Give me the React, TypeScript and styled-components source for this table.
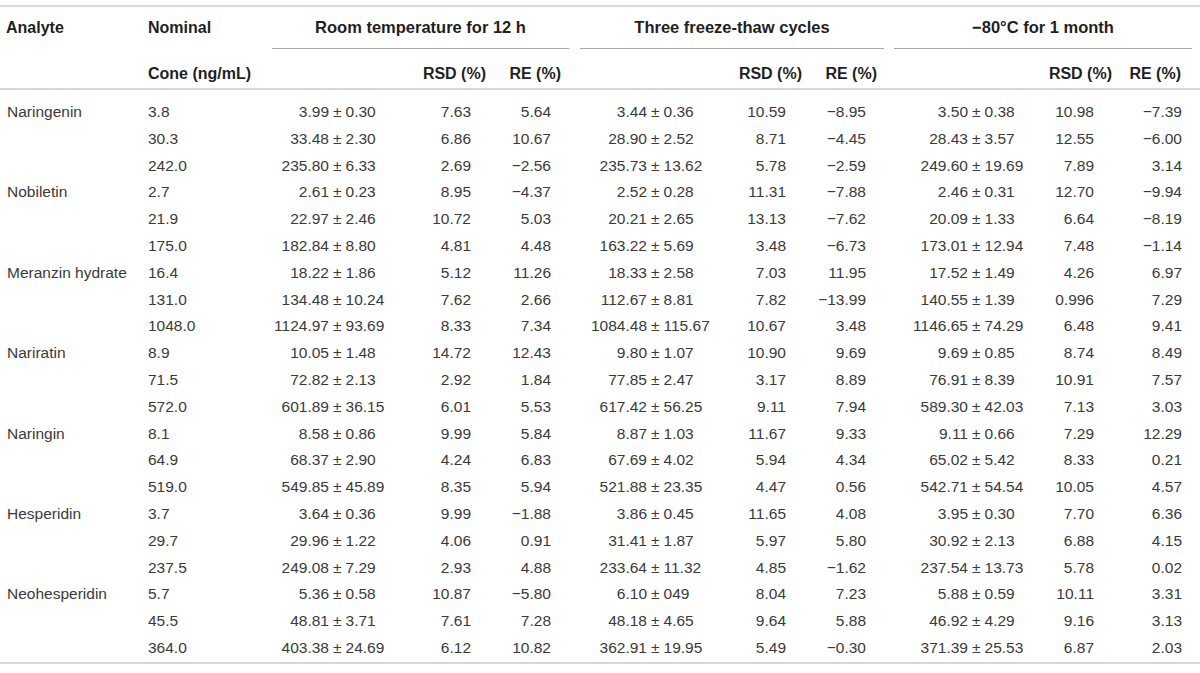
import styled, { createGlobalStyle } from "styled-components";

type Cond = { mean: string; sd: string; rsd: string; re: string };
type Level = { nominal: string; conds: Cond[] };
type Analyte = { name: string; levels: Level[] };

// one row of text: nominal | mean sd rsd re (x3)
const raw: [string, string, string[]][] = [
  ["Naringenin", "3.8", ["3.99", "0.30", "7.63", "5.64", "3.44", "0.36", "10.59", "−8.95", "3.50", "0.38", "10.98", "−7.39"]],
  ["", "30.3", ["33.48", "2.30", "6.86", "10.67", "28.90", "2.52", "8.71", "−4.45", "28.43", "3.57", "12.55", "−6.00"]],
  ["", "242.0", ["235.80", "6.33", "2.69", "−2.56", "235.73", "13.62", "5.78", "−2.59", "249.60", "19.69", "7.89", "3.14"]],
  ["Nobiletin", "2.7", ["2.61", "0.23", "8.95", "−4.37", "2.52", "0.28", "11.31", "−7.88", "2.46", "0.31", "12.70", "−9.94"]],
  ["", "21.9", ["22.97", "2.46", "10.72", "5.03", "20.21", "2.65", "13.13", "−7.62", "20.09", "1.33", "6.64", "−8.19"]],
  ["", "175.0", ["182.84", "8.80", "4.81", "4.48", "163.22", "5.69", "3.48", "−6.73", "173.01", "12.94", "7.48", "−1.14"]],
  ["Meranzin hydrate", "16.4", ["18.22", "1.86", "5.12", "11.26", "18.33", "2.58", "7.03", "11.95", "17.52", "1.49", "4.26", "6.97"]],
  ["", "131.0", ["134.48", "10.24", "7.62", "2.66", "112.67", "8.81", "7.82", "−13.99", "140.55", "1.39", "0.996", "7.29"]],
  ["", "1048.0", ["1124.97", "93.69", "8.33", "7.34", "1084.48", "115.67", "10.67", "3.48", "1146.65", "74.29", "6.48", "9.41"]],
  ["Nariratin", "8.9", ["10.05", "1.48", "14.72", "12.43", "9.80", "1.07", "10.90", "9.69", "9.69", "0.85", "8.74", "8.49"]],
  ["", "71.5", ["72.82", "2.13", "2.92", "1.84", "77.85", "2.47", "3.17", "8.89", "76.91", "8.39", "10.91", "7.57"]],
  ["", "572.0", ["601.89", "36.15", "6.01", "5.53", "617.42", "56.25", "9.11", "7.94", "589.30", "42.03", "7.13", "3.03"]],
  ["Naringin", "8.1", ["8.58", "0.86", "9.99", "5.84", "8.87", "1.03", "11.67", "9.33", "9.11", "0.66", "7.29", "12.29"]],
  ["", "64.9", ["68.37", "2.90", "4.24", "6.83", "67.69", "4.02", "5.94", "4.34", "65.02", "5.42", "8.33", "0.21"]],
  ["", "519.0", ["549.85", "45.89", "8.35", "5.94", "521.88", "23.35", "4.47", "0.56", "542.71", "54.54", "10.05", "4.57"]],
  ["Hesperidin", "3.7", ["3.64", "0.36", "9.99", "−1.88", "3.86", "0.45", "11.65", "4.08", "3.95", "0.30", "7.70", "6.36"]],
  ["", "29.7", ["29.96", "1.22", "4.06", "0.91", "31.41", "1.87", "5.97", "5.80", "30.92", "2.13", "6.88", "4.15"]],
  ["", "237.5", ["249.08", "7.29", "2.93", "4.88", "233.64", "11.32", "4.85", "−1.62", "237.54", "13.73", "5.78", "0.02"]],
  ["Neohesperidin", "5.7", ["5.36", "0.58", "10.87", "−5.80", "6.10", "049", "8.04", "7.23", "5.88", "0.59", "10.11", "3.31"]],
  ["", "45.5", ["48.81", "3.71", "7.61", "7.28", "48.18", "4.65", "9.64", "5.88", "46.92", "4.29", "9.16", "3.13"]],
  ["", "364.0", ["403.38", "24.69", "6.12", "10.82", "362.91", "19.95", "5.49", "−0.30", "371.39", "25.53", "6.87", "2.03"]],
];

const analytes: Analyte[] = [];
raw.forEach(([name, nominal, v]) => {
  const conds: Cond[] = [0, 1, 2].map((i) => ({
    mean: v[i * 4],
    sd: v[i * 4 + 1],
    rsd: v[i * 4 + 2],
    re: v[i * 4 + 3],
  }));
  if (name) analytes.push({ name, levels: [] });
  analytes[analytes.length - 1].levels.push({ nominal, conds });
});

// per condition group: underline insets, width left of ±, value / header right paddings
const groups = [
  { title: "Room temperature for 12 h", ml: 0, mr: 6, left: 57, rsdPad: 20, rsdHead: 5, rePad: 24, reHead: 14 },
  { title: "Three freeze-thaw cycles", ml: 5, mr: 5, left: 72, rsdPad: 20, rsdHead: 4, rePad: 23, reHead: 12 },
  { title: "−80°C for 1 month", ml: 5, mr: 8, left: 79, rsdPad: 24, rsdHead: 6, rePad: 18, reHead: 19 },
];

const App = () => {
  return (
    <>
      <GlobalStyle />
      <Table>
        <HeadRow>
          <HeadCell>Analyte</HeadCell>
          <HeadCell indent>Nominal</HeadCell>
          {groups.map((g) => (
            <GroupCell key={g.title} ml={g.ml} mr={g.mr}>
              {g.title}
            </GroupCell>
          ))}
        </HeadRow>
        <SubHeadRow>
          <HeadCell />
          <HeadCell indent>Cone (ng/mL)</HeadCell>
          {groups.map((g) => [
            <HeadCell key={g.title + "m"} />,
            <HeadCell key={g.title + "s"} right pad={g.rsdHead}>
              RSD (%)
            </HeadCell>,
            <HeadCell key={g.title + "r"} right pad={g.reHead}>
              RE (%)
            </HeadCell>,
          ])}
        </SubHeadRow>
        <Body>
          {analytes.map((a) =>
            a.levels.map((l, li) => (
              <Row key={a.name + l.nominal}>
                <Cell>{li === 0 ? a.name : ""}</Cell>
                <Cell indent>{l.nominal}</Cell>
                {l.conds.map((c, ci) => [
                  <MeanCell key={ci + "m"} left={groups[ci].left}>
                    <MeanPart>{c.mean}</MeanPart>
                    <span>±</span>
                    <span>{c.sd}</span>
                  </MeanCell>,
                  <Cell key={ci + "s"} right pad={groups[ci].rsdPad}>
                    {c.rsd}
                  </Cell>,
                  <Cell key={ci + "r"} right pad={groups[ci].rePad}>
                    {c.re}
                  </Cell>,
                ])}
              </Row>
            ))
          )}
        </Body>
      </Table>
    </>
  );
};

export default App;

const GlobalStyle = createGlobalStyle`
  body {
    margin: 0;
    background: #ffffff;
    font-family: "Liberation Sans", Arial, Helvetica, sans-serif;
  }
`;

const columns = "140px 132px 128px 91px 84px 135px 96px 83px 141px 88px 82px";

const Table = styled.div`
  width: 1200px;
  padding-top: 5px;
`;

const HeadRow = styled.div`
  display: grid;
  grid-template-columns: ${columns};
  height: 44px;
  border-top: 2px solid #dadada;
  align-items: stretch;
  box-sizing: border-box;
`;

const SubHeadRow = styled.div`
  display: grid;
  grid-template-columns: ${columns};
  height: 41px;
  padding-top: 10px;
  border-bottom: 2px solid #d8d8d8;
  align-items: center;
  box-sizing: border-box;
`;

interface CellStyle {
  readonly indent?: boolean;
  readonly right?: boolean;
  readonly pad?: number;
}

const HeadCell = styled.div<CellStyle>`
  display: flex;
  align-items: center;
  justify-content: ${({ right }) => (right ? "flex-end" : "flex-start")};
  padding-left: ${({ indent }) => (indent ? "8px" : "6px")};
  padding-right: ${({ pad }) => (pad ? pad + "px" : "0")};
  font-size: 16px;
  font-weight: bold;
  color: #1f1f1f;
  white-space: nowrap;
`;

interface GroupStyle {
  readonly ml: number;
  readonly mr: number;
}

const GroupCell = styled.div<GroupStyle>`
  grid-column: span 3;
  display: flex;
  align-items: center;
  justify-content: center;
  margin: 0 ${({ mr }) => mr}px 0 ${({ ml }) => ml}px;
  border-bottom: 1px solid #a8a8a8;
  font-size: 16.5px;
  font-weight: bold;
  color: #1f1f1f;
  white-space: nowrap;
`;

const Body = styled.div`
  padding: 8.6px 0 1px;
  border-bottom: 2px solid #d8d8d8;
`;

const Row = styled.div`
  display: grid;
  grid-template-columns: ${columns};
  height: 26.8px;
  align-items: center;
`;

const Cell = styled.div<CellStyle>`
  padding-left: ${({ indent }) => (indent ? "8px" : "7px")};
  padding-right: ${({ pad }) => (pad ? pad + "px" : "0")};
  text-align: ${({ right }) => (right ? "right" : "left")};
  font-size: 15.5px;
  color: #3a3a3a;
  white-space: nowrap;
`;

interface MeanStyle {
  readonly left: number;
}

const MeanCell = styled.div<MeanStyle>`
  display: grid;
  grid-template-columns: ${({ left }) => left}px auto auto;
  justify-content: start;
  column-gap: 4px;
  font-size: 15.5px;
  color: #3a3a3a;
  white-space: nowrap;
`;

const MeanPart = styled.span`
  text-align: right;
`;
